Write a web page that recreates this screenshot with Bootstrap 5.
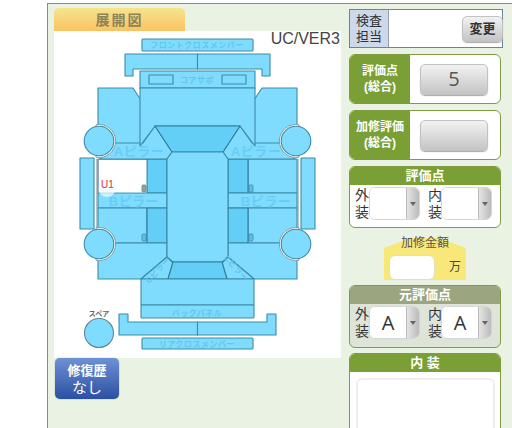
<!DOCTYPE html>
<html lang="ja">
<head>
<meta charset="utf-8">
<title>展開図</title>
<link href="https://cdn.jsdelivr.net/npm/bootstrap@5.3.0/dist/css/bootstrap.min.css" rel="stylesheet">
<style>
html,body{height:428px;overflow:hidden;background:#fff;}
body{font-family:"Liberation Sans","Noto Sans CJK JP",sans-serif;color:#333;padding:3px 0 0 47px;width:512px;}
.sheet{width:465px;height:425px;overflow:hidden;background:#eaf2e3;border:1px solid #7f9c45;border-right:0;border-bottom:0;padding:4px 0 0 6px;gap:8px;}
.leftcol{width:287px;flex:none;}
.tabtitle{width:131px;height:23px;border-radius:5px 5px 0 0;background:linear-gradient(#f5e48c,#fbc263);color:#8b835a;font-weight:700;font-size:14px;letter-spacing:2px;line-height:25px;text-align:center;}
.diagram{display:block;width:287px;height:327px;background:#fff;}
.pt{fill:#7fdcff;stroke:#3d8ba6;stroke-width:1.1;stroke-linejoin:round;}
.gl{fill:#63cff7;stroke:#2f7d99;stroke-width:1.1;stroke-linejoin:round;}
.ring{fill:#fff;stroke:#8a9a9e;stroke-width:1;}
.lab{fill:#62c6ec;font-size:8px;font-weight:700;text-anchor:middle;letter-spacing:.5px;}
.labb{fill:#6accf2;font-size:13px;font-weight:700;text-anchor:middle;letter-spacing:.5px;}
.nub{fill:#8fa5ac;stroke:#6d7f85;stroke-width:.8;}
.nub2{fill:#5fc0e4;stroke:#3d8ba6;stroke-width:.8;}
.ucv{font-size:16px;fill:#444;text-anchor:end;}
.u1{font-size:10px;fill:#e0333c;}
.spr{font-size:7px;fill:#666;text-anchor:middle;font-weight:700;}
.histbtn{width:64px;height:41px;border-radius:5px;margin-left:1px;background:linear-gradient(#6e92d4,#2b4fa3);color:#fff;border:0;font-size:13px;font-weight:700;line-height:17px;padding:2px 0 0;display:block;text-align:center;box-shadow:0 0 1px #456;}
.histbtn span{display:block;font-size:15px;font-weight:400;line-height:18px;}
.rightcol{width:154px;flex:none;gap:6px;padding-top:1px;}
.inspect{height:39px;border:1px solid #6b8299;background:#fff;width:154px;flex:none;}
.inslabel{width:39px;background:#cdd9ea;border-right:1px solid #8ea1b5;font-size:13px;line-height:16px;padding:3px 0 0;text-align:center;color:#333;}
.grayb{background:linear-gradient(#f2f2f2,#c4c4c4);border:1px solid #c2c2c2;border-radius:5px;color:#333;padding:0;box-shadow:0 1px 1px #aaa;}
.chg{width:41px;height:26px;font-size:13px;font-weight:700;margin-right:-1px;}
.scorebox{width:152px;height:50px;flex:none;background:#fff;border:1px solid #7f9c45;border-radius:6px;overflow:hidden;}
.scorehd{width:60px;background:#7a9f34;color:#fff;font-size:12px;font-weight:700;line-height:16px;text-align:center;}
.scoreb{width:68px;height:31px;margin-left:10px;font-family:"Open Sans",sans-serif;font-size:20px;line-height:28px;color:#555;}
.groupbox{width:152px;flex:none;background:#fff;border:1px solid #7f9c45;border-radius:6px;overflow:hidden;}
.grouphd{height:18px;background:#7a9f34;color:#fff;font-size:13px;font-weight:700;line-height:18px;text-align:center;}
.groupbody{height:42px;padding:2px 0 0 5px;}
.sidelab{width:14px;font-size:14px;line-height:17px;flex:none;color:#333;}
.selwrap{width:51px;height:33px;border:1px solid #d4d8d4;border-radius:6px;background:#fff;overflow:hidden;flex:none;}
.selwrap select{appearance:none;-webkit-appearance:none;border:0;background:#fff;width:37px;height:31px;padding:0;font-size:20px;text-align:center;text-align-last:center;color:#333;outline:0;font-family:"Open Sans",sans-serif;}
.selarrow{width:13px;height:31px;background:linear-gradient(90deg,#e4e4e4,#bbb);border-left:1px solid #bbb;}
.selarrow i{display:block;width:0;height:0;margin:14px auto 0;border:3px solid transparent;border-top:4px solid #666;border-bottom:0;}
.gap1{margin-left:8px;}
.gap2b{margin-left:-1px;}
.amtblock{height:46px;flex:none;margin-bottom:-1px;padding:4px 0 0 35px;position:relative;}
.amount{width:82px;height:42px;padding-top:16px;background:#f8e87a;clip-path:polygon(32% 0,68% 0,100% 24%,100% 100%,0 100%,0 24%);}
.amttitle{position:absolute;top:3px;left:35px;width:82px;font-size:12px;color:#555;text-align:center;line-height:12px;margin-top:0;}
.amtinput{width:46px;height:25px;border:1px solid #e3e0b8;border-radius:6px;background:#fff;margin-left:5px;flex:none;}
.amtunit{font-size:12px;margin-left:14px;color:#444;}
.orig{background:#dfe4d9;}
.orig .grouphd{background:#9ba67f;}
.orig .groupbody{height:43px;}
.innerbox{height:120px;margin-top:-1px;}
.innerbody{padding:6px 6px 0 6px;}
.ta{width:139px;height:70px;border:2px solid #eee;border-radius:6px;resize:none;display:block;outline:0;}
</style>
</head>
<body>
<div class="sheet d-flex">
  <div class="leftcol">
    <div class="tabtitle">展開図</div>
    <svg class="diagram" viewBox="54 31 287 327" xmlns="http://www.w3.org/2000/svg">
      <defs>
        <g id="halfcar">
          <polygon class="pt" points="125,54 197.5,54 197.5,69 133,69 133,76 125,76"/>
          <polygon class="pt" points="98,88 133,88 141,100 141,146 113,146 98,126"/>
          <rect class="pt" x="98" y="159" width="49" height="34"/>
          <rect class="gl" x="147" y="159" width="20" height="34"/>
          <rect class="pt" x="98" y="193" width="69" height="15"/>
          <rect class="pt" x="98" y="208" width="49" height="35"/>
          <rect class="gl" x="147" y="208" width="20" height="35"/>
          <polygon class="pt" points="98,243 167,243 167,257 141,279 98,279"/>
          <polygon class="pt" points="167,257 173,263 168,279 141,279"/>
          <polygon class="pt" points="155,126 172,152 167,159 100,159 113,143 143,143"/>
          <rect class="pt" x="80" y="158" width="14" height="71"/>
          <path class="ring" d="M96 124.8A16.5 16.5 0 1 1 96 157.2Z"/>
          <circle class="pt" cx="99" cy="141" r="14.8"/>
          <path class="ring" d="M96 227.8A16.5 16.5 0 1 1 96 260.2Z"/>
          <circle class="pt" cx="99" cy="244" r="14.8"/>
          <path d="M97 159V228" stroke="#8a9a9e" stroke-width="1.2" fill="none"/>
          <polygon class="pt" points="119,314 128,314 128,322 197.5,322 197.5,335 119,335"/>
        </g>
      </defs>
      <rect class="pt" x="142" y="39" width="111" height="12" rx="1"/>
      <use href="#halfcar"/>
      <use href="#halfcar" transform="translate(395,0) scale(-1,1)"/>
      <rect class="pt" x="140" y="71" width="115" height="17"/>
      <rect class="pt" x="149" y="75" width="24" height="9"/>
      <rect class="pt" x="222" y="75" width="24" height="9"/>
      <polygon class="pt" points="140,88 255,88 255,146 240,126 155,126 140,146"/>
      <polygon class="gl" points="155,126 240,126 223,152 172,152"/>
      <polygon class="pt" points="172,152 223,152 228,159 228,257 222,262 173,262 167,257 167,159"/>
      <polygon class="gl" points="173,262 222,262 227,279 168,279"/>
      <rect class="pt" x="141" y="279" width="113" height="26"/>
      <rect class="pt" x="141" y="305" width="113" height="13" rx="1"/>
      <rect class="pt" x="142" y="338" width="111" height="11" rx="1"/>
      <polygon points="98.5,160 146.5,160 146.5,192.5 98.5,192.5" fill="#fff"/>
      <circle cx="107" cy="188" r="9" fill="#eef9ff" opacity=".7"/>
      <path d="M98 159V193" stroke="#8a9a9e" stroke-width="1.4"/>
      <rect class="nub" x="142" y="185" width="4" height="7" rx="1"/>
      <rect class="nub2" x="142" y="234" width="4" height="7" rx="1"/>
      <rect class="nub2" x="249" y="185" width="4" height="7" rx="1"/>
      <rect class="nub2" x="249" y="234" width="4" height="7" rx="1"/>
      <text class="lab" x="197" y="48">フロントクロスメンバー</text>
      <text class="lab" x="197" y="83">コアサポ</text>
      <text class="labb" x="139" y="156">Aピラー</text>
      <text class="labb" x="256" y="156">Aピラー</text>
      <text class="labb" x="134" y="206">Bピラー</text>
      <text class="labb" x="266" y="206">Bピラー</text>
      <text class="lab" x="197" y="316">バックパネル</text>
      <text class="lab" x="197" y="347">リアクロスメンバー</text>
      <text class="lab" transform="translate(160,272) rotate(-48)">Cピラー</text>
      <text class="lab" transform="translate(234,270) rotate(48)">Cピラー</text>
      <text class="ucv" x="340" y="44">UC/VER3</text>
      <text class="u1" x="101" y="188">U1</text>
      <text class="spr" x="99" y="316">スペア</text>
      <circle class="pt" cx="99" cy="333" r="14.5" style="stroke:#5b8a99"/>
    </svg>
    <button type="button" class="histbtn">修復歴<span>なし</span></button>
  </div>
  <div class="rightcol d-flex flex-column">
    <div class="inspect d-flex align-items-center justify-content-between">
      <div class="inslabel align-self-stretch">検査<br>担当</div>
      <button type="button" class="grayb chg">変更</button>
    </div>
    <div class="scorebox d-flex align-items-center">
      <div class="scorehd align-self-stretch d-flex align-items-center justify-content-center">評価点<br>(総合)</div>
      <button type="button" class="grayb scoreb">5</button>
    </div>
    <div class="scorebox d-flex align-items-center">
      <div class="scorehd align-self-stretch d-flex align-items-center justify-content-center">加修評価<br>(総合)</div>
      <button type="button" class="grayb scoreb">&nbsp;</button>
    </div>
    <div class="groupbox">
      <div class="grouphd">評価点</div>
      <div class="groupbody d-flex">
        <div class="sidelab">外装</div>
        <div class="selwrap d-flex"><select aria-label="外装"><option></option></select><div class="selarrow"><i></i></div></div>
        <div class="sidelab gap1">内装</div>
        <div class="selwrap d-flex gap2b"><select aria-label="内装"><option></option></select><div class="selarrow"><i></i></div></div>
      </div>
    </div>
    <div class="amtblock">
      <div class="amount d-flex align-items-center">
        <div class="amtinput"></div>
        <div class="amtunit">万</div>
      </div>
      <div class="amttitle">加修金額</div>
    </div>
    <div class="groupbox orig">
      <div class="grouphd">元評価点</div>
      <div class="groupbody d-flex">
        <div class="sidelab">外装</div>
        <div class="selwrap d-flex"><select aria-label="元外装"><option>A</option></select><div class="selarrow"><i></i></div></div>
        <div class="sidelab gap1">内装</div>
        <div class="selwrap d-flex gap2b"><select aria-label="元内装"><option>A</option></select><div class="selarrow"><i></i></div></div>
      </div>
    </div>
    <div class="groupbox innerbox">
      <div class="grouphd">内 装</div>
      <div class="innerbody"><textarea class="ta" aria-label="内装"></textarea></div>
    </div>
  </div>
</div>
</body>
</html>
